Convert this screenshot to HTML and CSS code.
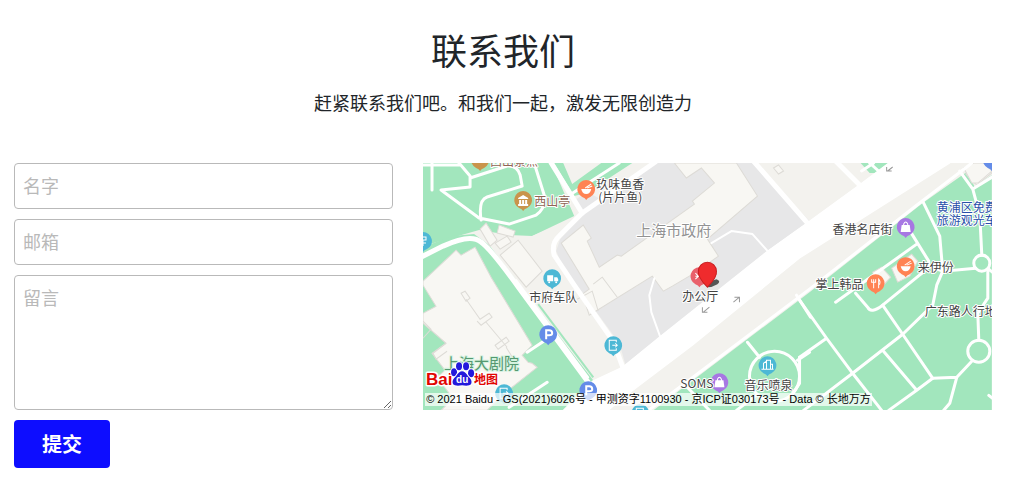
FILE: index.html
```html
<!DOCTYPE html>
<html lang="zh-CN">
<head>
  <meta charset="utf-8">
  <meta name="viewport" content="width=device-width, initial-scale=1">
  <title>联系我们</title>
  <link rel="stylesheet" href="styles.css">
</head>
<body>
  <section class="contact">
    <header class="contact-header">
      <h2>联系我们</h2>
      <p>赶紧联系我们吧。和我们一起，激发无限创造力</p>
    </header>

    <div class="contact-body">
      <form class="contact-form">
        <input type="text" name="name" placeholder="名字" aria-label="名字">
        <input type="email" name="email" placeholder="邮箱" aria-label="邮箱">
        <textarea name="message" placeholder="留言" aria-label="留言"></textarea>
        <button type="submit">提交</button>
      </form>

      <div class="map">
        <svg class="map-canvas" viewBox="0 0 568 247" preserveAspectRatio="xMidYMid slice">
          <defs>
            <path id="pin" d="M0-9A9 9 0 0 1 4 8Q1 9 0 11Q-1 9-4 8A9 9 0 0 1 0-9Z"/>
            <g id="bag"><path d="M-4-2H4L5 5H-5Z"/><path d="M-2-1V-3Q0-7 2-3V-1" class="icon-line"/></g>
            <g id="bowl"><path d="M-5 0H5Q4 5 0 5Q-4 5-5 0Z"/><path d="M-1-1L5-5M1-1L6-3" class="icon-line"/></g>
            <path id="exit" class="icon-line" d="M3-3V-5H-4V5H3V3M-1 0H4M2-2L4 0L2 2"/>
            <path id="parking" class="icon-bold" d="M-2 5V-4H1Q4-4 4-1Q4 1 1 1H-2"/>
          </defs>

          <!-- parks -->
          <g class="park">
            <path d="M0 0H128L151 53L109 73L86 72L56 67L0 83Z"/>
            <path d="M131 0H140L149 21L178 0H209L163 30L151 33Z"/>
            <path d="M0 84L29 73L51 71L66 82L170 217L143 247H0Z"/>
            <path d="M437 0H466L456 10H446Z"/>
            <path d="M230 247L263 222L386 129L499 40L543 9L551 24L568 12V247Z"/>
          </g>

          <path class="ground" d="M63 77L96 115L173 218L198 202L154 122L132 88L136 76L157 53L109 73L86 76Z"/>
          <path class="road w3" d="M93 117L165 214"/>
          <path class="park-line" d="M115 141L170 214"/>

          <!-- government block -->
          <path class="block" d="M232 0L196 24L160 51L137 76L133 88L139 102L196 180L202 201L236 174L344 88L386 58L330 0Z"/>
          <path class="block" d="M152 37L164 29L177 36L160 50Z"/>

          <g class="building">
            <path d="M251 0L263 15L278 5L291 20L269 39L271 41L198 93L194 92L184 99L193 113L196 128L190 130L166 152L138 110Q133 90 138 80L160 62L168 75L165 78L176 93L184 99L251 42L269 39L313 0L334 33L283 75L295 93L271 110L249 123L240 128L230 114L166 152L155 136L139 83L160 62L168 77L193 93Z" class="hidden-shape"/>
            <path d="M251 0L263 15L278 5L291 20L269 38L271 41L198 93L194 92L176 104L164 78L168 75L160 62L138 80L166 126L159 131L166 152L229 113L240 128L249 123L271 110L295 93L284 76L334 33L313 0Z"/>
            <path d="M0 118L33 87L38 92L52 84L68 114L109 182L99 192L105 199L109 200L114 204L80 231L64 247H18L30 235L14 214L22 207L9 190L23 180L0 160L0 150L13 143L0 122Z"/>
            <path d="M57 66L63 60L74 77L67 83Z"/>
            <path d="M76 62L92 68L90 74L74 70Z"/>
            <path d="M72 80L84 73L88 79L77 86Z"/>
            <path d="M77 92L95 77L119 108L103 124Z"/>
            <path d="M542 11L556 2L568 10L553 22Z"/>
            <path d="M540 5L550 0H560L568 8L554 20L548 20Z"/>
            <path d="M449 109L458 104L467 114L458 124Z"/>
            <path d="M468 105L488 91L494 98L486 113L474 119Z"/>
            <path d="M350 5L355 2L360 8L355 11Z"/>
          </g>
          <g class="outline">
            <path d="M38 130L42 128L47 135L43 138ZM43 136L57 156L66 150L69 154L58 162L54 158M63 159L84 184M72 182L83 174L86 178L75 186ZM83 184L93 200M23 180L10 190L13 196L24 188M0 175L8 166L0 158"/>
            <path d="M170 121L179 114L194 134M154 136L169 128L175 148"/>
          </g>

          <!-- streets -->
          <path class="road" d="M465 0L434 23L386 58L344 88L236 174L199 204L169 218L140 247H185L203 232L269 182L376 95L526 0Z"/>
          <g class="road w6">
            <path d="M-4 95L20 83Q48 70 58 79Q67 85 96 125L165 219"/>
            <path d="M128 0L159 50"/>
            <path d="M232 -1L159 50L136 73Q128 80 131 92L151 122L190 178L201 208"/>
            <path d="M329 -3L384 60"/>
            <path d="M412 -2L438 24"/>
          </g>
          <g class="road w4">
            <path d="M148 31L196 0M104 189L122 177M86 244L124 219"/>
            <path d="M18 27L56 55L86 61L113 52Q123 45 121 32L111 0M18 27L47 24V13L36 0M47 15L84 3Q94 2 97 12L99 23L64 34Q55 37 58 57M0 2H37M9 0V27"/>
            <path d="M225 247L263 219L386 126L492 43L543 4L548 0"/>
            <path d="M450 0L438 8M456 9L446 0"/>
            <path d="M536 8L549 26L570 13M549 26L556 52L558 92M552 105L519 108L513 122L509 142L479 171L429 210L396 235L380 247"/>
            <path d="M499 38L516 73L519 108L505 103M487 69L505 98Q506 105 497 111L459 142Q447 151 444 144L432 130M493 81L412 139"/>
            <path d="M459 142L479 171L509 215M376 137L403 175L429 210L458 247M403 175L376 194"/>
            <path d="M459 187L493 227M465 247L493 227L509 215L533 214L548 198M533 214L526 240L520 247M555 177L554 150L564 135V108M565 106L572 112M373 132L387 154"/>
            <path d="M324 179L336 194M386 189L374 197M262 222L286 247M334 231L313 247M565 232L570 236M376 194V220L368 232"/>
            <circle cx="558" cy="100" r="8"/>
            <circle cx="555" cy="188" r="11"/>
            <circle cx="351" cy="213" r="25"/>
          </g>
          <g class="road w3">
            <path d="M288 80L308 68L329 71L346 90M231 115L226 132L228 149L237 174"/>
          </g>
          <g class="arrow">
            <path d="M286 144L280 149M279 144V149H284M310 139L316 134M311 134H316V139M469 4L464 8M463 4V8H468"/>
          </g>

          <!-- places -->
          <g class="pin-gold"><use href="#pin" x="57" y="-3"/><use href="#pin" x="100" y="37"/></g>
          <g class="pin-orange"><use href="#pin" x="163" y="26"/><use href="#pin" x="482" y="103"/><use href="#pin" x="452" y="120"/></g>
          <g class="pin-teal">
            <use href="#pin" x="0" y="78"/><use href="#pin" x="129" y="115"/><use href="#pin" x="190" y="182"/>
            <use href="#pin" x="81" y="230"/><use href="#pin" x="344" y="202"/><use href="#pin" x="217" y="250"/>
          </g>
          <g class="pin-purple"><use href="#pin" x="482" y="64"/><use href="#pin" x="296" y="219"/></g>
          <g class="pin-blue"><use href="#pin" x="125" y="171"/><use href="#pin" x="165" y="227"/><use href="#pin" x="568" y="-3"/></g>
          <g class="pin-red"><use href="#pin" x="276" y="113"/></g>
          <g class="icon">
            <path d="M95 35L100 32L105 35V36H95ZM96 37H98V41H96ZM99 37H101V41H99ZM102 37H104V41H102ZM95 41H105V43H95Z"/>
            <use href="#bowl" x="163" y="26"/>
            <use href="#bowl" x="482" y="103"/>
            <path class="icon-line" d="M448 116V119H452V116M450 116V125M455 125V116Q457 118 456 121H455"/>
            <use href="#bag" x="482" y="64"/>
            <use href="#bag" x="296" y="219"/>
            <path d="M124 112H130V118H124ZM131 114H134L135 116V118H131Z"/>
            <circle cx="126" cy="119" r="1"/><circle cx="133" cy="119" r="1"/>
            <use href="#exit" x="190" y="182"/>
            <use href="#exit" x="81" y="230"/>
            <use href="#exit" x="217" y="250"/>
            <path class="icon-line" d="M-2 74H3V77H-2M-2 80H3M0 77V83"/>
            <use href="#parking" x="125" y="171"/>
            <use href="#parking" x="165" y="227"/>
            <path class="icon-line" d="M340 206V200L343 198V206M343 206V197H347V206M347 201H349V206M338 206H350"/>
            <path class="icon-line" d="M272 110L275 113L272 116M272 113H276"/>
          </g>

          <!-- labels -->
          <g class="label">
            <text class="brown" x="67" y="3">西山景点</text>
            <text class="brown" x="111" y="43">西山亭</text>
            <text x="173" y="26">玖味鱼香</text>
            <text x="175" y="39">(片片鱼)</text>
            <text x="409" y="71">香港名店街</text>
            <text x="494" y="109">来伊份</text>
            <text x="392" y="126">掌上韩品</text>
            <text x="501" y="153">广东路人行地下通道</text>
            <text x="106" y="139">市府车队</text>
            <text x="259" y="138">办公厅</text>
            <text x="257" y="225">SOMS</text>
            <text x="321" y="227">音乐喷泉</text>
            <text class="blue" x="513" y="49">黄浦区免费</text>
            <text class="blue" x="513" y="62">旅游观光车</text>
            <text class="area" x="213" y="73">上海市政府</text>
            <text class="area green" x="21" y="206">上海大剧院</text>
          </g>

          <!-- office marker -->
          <path class="marker-shadow" d="M284 124Q286 117 293 116Q298 118 294 121Q289 124 284 124Z"/>
          <path class="marker" d="M284 124Q274 114 275 108A9 9 0 0 1 293 108Q294 114 284 124Z"/>

          <!-- map provider logo -->
          <g class="logo">
            <text class="logo-latin" x="3" y="222">Bai</text>
            <text class="logo-cjk" x="51" y="221">地图</text>
            <g class="paw">
              <ellipse cx="31" cy="209" rx="3" ry="4"/>
              <ellipse cx="36" cy="203" rx="3" ry="4"/>
              <ellipse cx="43" cy="203" rx="3" ry="4"/>
              <ellipse cx="48" cy="210" rx="3" ry="4"/>
              <path d="M39 208Q42 208 45 213Q50 217 48 221Q46 223 39 222Q32 223 30 221Q28 217 33 213Q36 208 39 208Z"/>
            </g>
            <text class="logo-du" x="33" y="220">du</text>
          </g>
        </svg>
        <p class="map-copyright">© 2021 Baidu - GS(2021)6026号 - 甲测资字1100930 - 京ICP证030173号 - Data © 长地万方</p>
      </div>
    </div>
  </section>
</body>
</html>
```
FILE: styles.css
```css
* {
  box-sizing: border-box;
}
body {
  margin: 0;
  color: #212529;
  background-color: #fff;
  font-family: "Noto Sans CJK SC", sans-serif;
  font-size: 18px;
}
.contact {
  padding: 22px 19px 12px 14px;
}
.contact-header {
  text-align: center;
  margin-bottom: 46px;
}
.contact-header h2 {
  margin: 0 0 12px;
  font-size: 36px;
  font-weight: 400;
  line-height: 54px;
}
.contact-header p {
  margin: 0;
  line-height: 29px;
}
.contact-body {
  display: grid;
  grid-template-columns: 2fr 3fr;
  gap: 30px;
  align-items: start;
}
.contact-form {
  display: flex;
  flex-direction: column;
  align-items: flex-start;
  gap: 10px;
}
.contact-form input,
.contact-form textarea {
  width: 100%;
  padding: 8px;
  border: 1px solid #b9b9b9;
  border-radius: 4px;
  background-color: #fff;
  font-family: inherit;
  font-size: 18px;
  line-height: 26px;
}
.contact-form input {
  height: 46px;
  padding-bottom: 10px;
}
.contact-form textarea {
  display: block;
  height: 135px;
  resize: vertical;
}
.contact-form ::placeholder {
  color: #b9b9b9;
  opacity: 1;
}
.contact-form button {
  padding: 9px 28px;
  border: none;
  border-radius: 4px;
  background-color: #0d0dff;
  color: #fff;
  font-family: inherit;
  font-size: 20px;
  font-weight: 700;
  line-height: 30px;
  cursor: pointer;
}

/* map */
.map {
  position: relative;
  overflow: hidden;
  min-width: 0;
}
.map-canvas {
  display: block;
  width: 100%;
  background-color: #f3f2ee;
}
.map-copyright {
  position: absolute;
  left: 2px;
  bottom: 4px;
  margin: 0;
  padding: 0 1px;
  background-color: rgba(255, 255, 255, 0.7);
  color: #000;
  font-family: "Liberation Sans", "Noto Sans CJK SC", sans-serif;
  font-size: 11px;
  line-height: 13px;
  white-space: nowrap;
}
.park {
  fill: #a2e6bd;
}
.park-line {
  stroke: #a2e6bd;
  stroke-width: 2;
}
.ground {
  fill: #f3f2ee;
}
.block {
  fill: #e7e7e8;
}
.building {
  fill: #f8f7f3;
  stroke: #dddbd6;
}
.hidden-shape {
  display: none;
}
.outline {
  fill: none;
  stroke: #dddbd6;
}
.road {
  fill: #fff;
  stroke: #fff;
  stroke-linejoin: round;
}
.w3,
.w4,
.w6 {
  fill: none;
  stroke-linecap: round;
}
.w3 {
  stroke-width: 2;
}
.w4 {
  stroke-width: 3;
}
.w6 {
  stroke-width: 5;
}
.arrow {
  fill: none;
  stroke: #999;
}
.pin-gold {
  fill: #c9944b;
}
.pin-orange {
  fill: #ff8354;
}
.pin-teal {
  fill: #4db8d5;
}
.pin-purple {
  fill: #a777e3;
}
.pin-blue {
  fill: #648ce8;
}
.pin-red {
  fill: #e9606b;
}
.icon {
  fill: #fff;
}
.icon-line,
.icon-bold {
  fill: none;
  stroke: #fff;
}
.icon-bold {
  stroke-width: 2;
}
.label {
  fill: #444;
  stroke: #fff;
  stroke-width: 2;
  stroke-linejoin: round;
  paint-order: stroke;
  font-family: "Noto Sans CJK SC", sans-serif;
  font-size: 12px;
}
.label .brown {
  fill: #8f6554;
}
.label .blue {
  fill: #2850a8;
}
.label .area {
  fill: #929292;
  font-size: 15px;
}
.label .green {
  fill: #559870;
  stroke: #d5f2df;
}
.marker {
  fill: #ef2b2d;
  stroke: #c81e20;
}
.marker-shadow {
  fill: #555;
}
.logo {
  stroke: #fff;
  stroke-width: 3;
  stroke-linejoin: round;
  paint-order: stroke;
}
.logo-latin,
.logo-cjk {
  fill: #e10602;
  font-weight: 700;
}
.logo-latin {
  font-family: "Liberation Sans", sans-serif;
  font-size: 17px;
}
.logo-cjk {
  font-family: "Noto Sans CJK SC", sans-serif;
  font-size: 12px;
}
.paw {
  fill: #2319dc;
  stroke-width: 2;
}
.logo-du {
  fill: #fff;
  stroke: none;
  font-family: "Liberation Sans", sans-serif;
  font-size: 10px;
  font-weight: 700;
}
```
